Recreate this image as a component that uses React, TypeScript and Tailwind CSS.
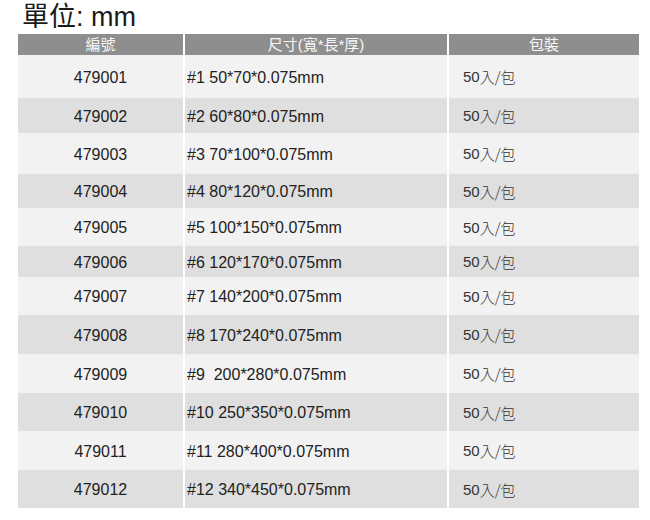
import React from "react";

const rows = [
  { id: "479001", size: "#1 50*70*0.075mm", h: "h-[43px]" },
  { id: "479002", size: "#2 60*80*0.075mm", h: "h-[35px]" },
  { id: "479003", size: "#3 70*100*0.075mm", h: "h-[41px]" },
  { id: "479004", size: "#4 80*120*0.075mm", h: "h-[34px]" },
  { id: "479005", size: "#5 100*150*0.075mm", h: "h-[38px]" },
  { id: "479006", size: "#6 120*170*0.075mm", h: "h-[31px]" },
  { id: "479007", size: "#7 140*200*0.075mm", h: "h-[38px]" },
  { id: "479008", size: "#8 170*240*0.075mm", h: "h-[39px]" },
  { id: "479009", size: "#9  200*280*0.075mm", h: "h-[39px]" },
  { id: "479010", size: "#10 250*350*0.075mm", h: "h-[38px]" },
  { id: "479011", size: "#11 280*400*0.075mm", h: "h-[39px]" },
  { id: "479012", size: "#12 340*450*0.075mm", h: "h-[38px]" },
];

const sans = "font-['Liberation_Sans','Noto_Sans_CJK_TC',sans-serif]";

export default function App() {
  return (
    <div className={`w-[650px] h-[520px] bg-white ${sans} text-[#222]`}>
      <div className="h-[34px] pl-[22px] text-[27px] leading-[34px] text-[#1a1a1a]">
        單位: mm
      </div>
      <div className="ml-[18px] w-[621px]">
        <div className="grid grid-cols-[165px_262px_190px] gap-x-[2px] h-[21px] text-[15px] leading-[21px] text-[#f7f7f7]">
          <div className="bg-[#8e8e8e] text-center">編號</div>
          <div className="bg-[#8e8e8e] text-center">尺寸(寬*長*厚)</div>
          <div className="bg-[#8e8e8e] text-center">包裝</div>
        </div>
        {rows.map((r, i) => {
          const bg = i % 2 === 0 ? "bg-[#f2f2f2]" : "bg-[#dfdfdf]";
          return (
            <div
              key={r.id}
              className={`grid grid-cols-[165px_262px_190px] gap-x-[2px] ${r.h} text-[16px]`}
            >
              <div className={`${bg} flex items-center justify-center pt-[2px]`}>{r.id}</div>
              <div className={`${bg} flex items-center pl-[2px] pt-[2px] whitespace-pre`}>{r.size}</div>
              <div className={`${bg} flex items-center pl-[14px] pt-[2px] text-[15px] text-[#333]`}>
                50<span className="font-['Noto_Sans_CJK_TC',sans-serif] font-light">入/包</span>
              </div>
            </div>
          );
        })}
      </div>
    </div>
  );
}
